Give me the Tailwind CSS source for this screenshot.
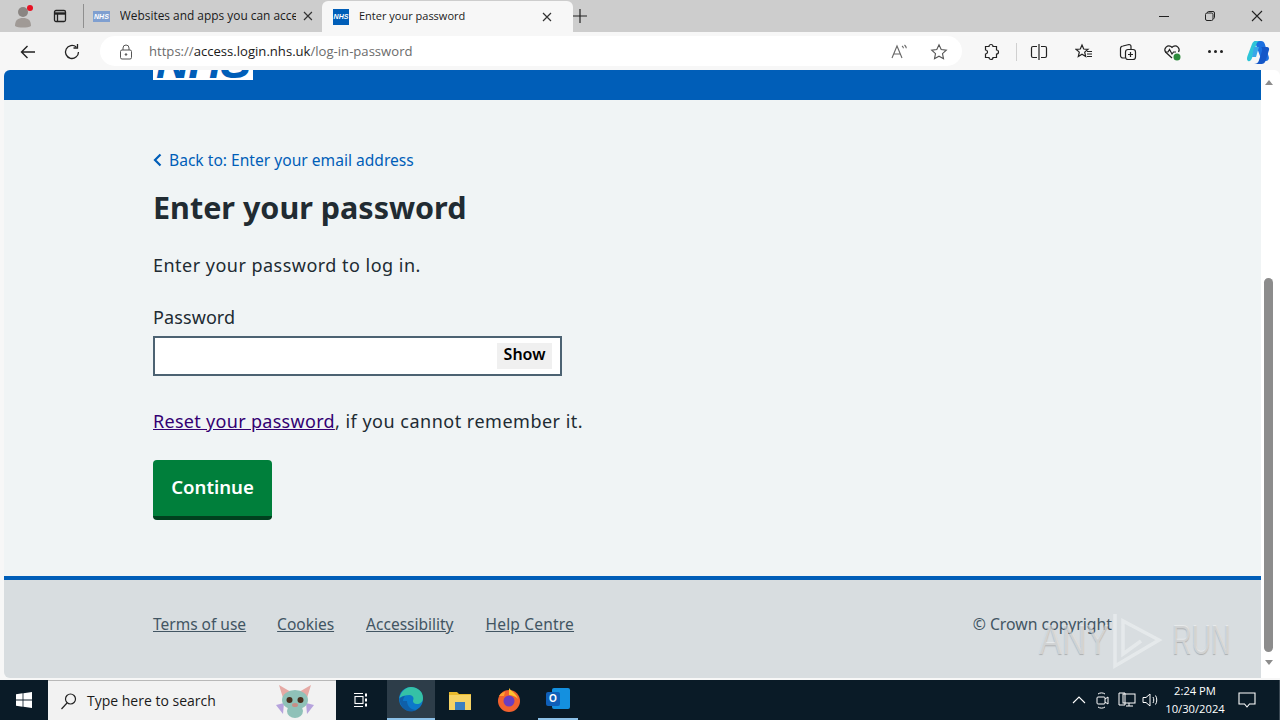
<!DOCTYPE html>
<html lang="en">
  <head>
    <meta charset="UTF-8" />
    <title>Enter your password</title>
    <script src="https://cdn.jsdelivr.net/npm/@tailwindcss/browser@4"></script>
  </head>
  <body class="w-[1280px] h-[720px] overflow-hidden relative bg-[#f7f7f7] font-['Noto_Sans',sans-serif]">
    <!-- Tab strip -->
    <div class="h-[32px] bg-[#cdcdcd] flex items-center text-[#1a1a1a] font-['Open_Sans',sans-serif]">
      <div class="w-[44px] h-[32px] flex items-center justify-center relative">
        <svg width="20" height="24" viewBox="0 0 20 24" class="ml-[1px]">
          <circle cx="10" cy="8" r="5" fill="#8a8582" />
          <path d="M2 22c0-6 3-8 8-8s8 2 8 8c-3 2-13 2-16 0z" fill="#a09a96" />
        </svg>
        <span class="absolute left-[27px] top-[5px] w-[6px] h-[6px] rounded-full bg-[#e81123]"></span>
      </div>
      <div class="w-[32px] h-[32px] flex items-center justify-center">
        <svg width="16" height="16" viewBox="0 0 16 16" fill="none" stroke="#222" stroke-width="1.3">
          <rect x="2.5" y="2.5" width="11" height="11" rx="1.5" />
          <path d="M2.5 5.5h11" stroke-width="2.4" />
          <path d="M5.5 5.5v8" />
        </svg>
      </div>
      <div class="w-[1px] h-[24px] bg-[#8f8f8f] ml-[7px]"></div>
      <!-- inactive tab -->
      <div class="w-[238px] h-[32px] flex items-center pl-[9px] pr-[8px]">
        <div class="w-[17px] h-[11px] bg-[#7f9fd0] text-white text-[7px] leading-[11px] font-bold italic text-center font-['Liberation_Sans',sans-serif]">NHS</div>
        <div class="ml-[10px] text-[11.9px] w-[178px] overflow-hidden whitespace-nowrap">Websites and apps you can acce<span class="text-[#8a8a8a]">s</span></div>
        <svg width="12" height="12" viewBox="0 0 12 12" class="ml-[6px]" stroke="#333" stroke-width="1.2"><path d="M2 2l8 8M10 2l-8 8" /></svg>
      </div>
      <!-- active tab -->
      <div class="w-[251px] h-[32px] bg-[#f7f7f7] rounded-t-[6px] flex items-center pl-[11px] pr-[20px] mt-[1px]">
        <div class="w-[16px] h-[16px] bg-[#005eb8] text-white text-[7px] leading-[16px] font-bold italic text-center font-['Liberation_Sans',sans-serif]">NHS</div>
        <div class="ml-[10px] text-[11px] flex-1 whitespace-nowrap">Enter your password</div>
        <svg width="12" height="12" viewBox="0 0 12 12" stroke="#333" stroke-width="1.2"><path d="M2 2l8 8M10 2l-8 8" /></svg>
      </div>
      <svg width="16" height="16" viewBox="0 0 16 16" class="ml-[-1px]" stroke="#222" stroke-width="1.2"><path d="M8 1v14M1 8h14" /></svg>
      <!-- window controls -->
      <div class="ml-auto flex items-center pr-[16px] gap-[34px]">
        <svg width="12" height="12" viewBox="0 0 12 12" stroke="#222" stroke-width="1"><path d="M1 6.5h10" /></svg>
        <svg width="12" height="12" viewBox="0 0 12 12" fill="none" stroke="#222" stroke-width="1"><rect x="1.5" y="3" width="7.5" height="7.5" rx="1.5" /><path d="M3.5 3V2.5a1 1 0 0 1 1-1h4.500a1.500 1.500 0 0 1 1.500 1.500v4.500a1 1 0 0 1-1 1" /></svg>
        <svg width="14" height="14" viewBox="0 0 14 14" stroke="#222" stroke-width="1.1"><path d="M2 2l10 10M12 2L2 12" /></svg>
      </div>
    </div>

    <!-- Toolbar -->
    <div class="h-[38px] bg-[#f7f7f7] flex items-center">
      <div class="w-[100px] flex items-center pl-[19px] mt-[1px]">
        <svg width="18" height="18" viewBox="0 0 18 18" fill="none" stroke="#222" stroke-width="1.4"><path d="M16 9H2.500M8.500 3L2.500 9l6 6" /></svg>
        <svg width="18" height="18" viewBox="0 0 18 18" fill="none" stroke="#222" stroke-width="1.3" class="ml-[26px]"><path d="M15.500 9a6.500 6.500 0 1 1-2.200-4.900" /><path d="M14.500 1v4h-4" /></svg>
      </div>
      <div class="w-[862px] h-[30px] bg-white rounded-full flex items-center pl-[19px] pr-[14px] pt-[1px] text-[13.1px] text-[#6b6b6b] font-['Open_Sans',sans-serif]">
        <svg width="14" height="16" viewBox="0 0 14 16" fill="none" stroke="#555" stroke-width="1"><rect x="1.500" y="6" width="11" height="9" rx="1.500" /><path d="M4 6V4a3 3 0 0 1 6 0v2" /><circle cx="7" cy="10.500" r="0.800" fill="#555" /></svg>
        <span class="ml-[16px]">https://<span class="text-[#1a1a1a]">access.login.nhs.uk</span>/log-in-password</span>
        <svg width="18" height="18" viewBox="0 0 18 18" fill="none" stroke="#666" stroke-width="1.1" class="ml-auto"><path d="M2 15L7 3l5 12M3.800 11h6.400" /><path d="M12 3c1 .6 1.400 1.400 1.400 2.300M14.500 2c1.200 1 1.800 2 1.800 3.300" /></svg>
        <svg width="18" height="18" viewBox="0 0 18 18" fill="none" stroke="#555" stroke-width="1.1" class="ml-[22px]"><path d="M9 1.800l2.200 4.700 5.100.6-3.800 3.500 1 5.100L9 13.200l-4.500 2.500 1-5.100L1.700 7.100l5.100-.6z" /></svg>
      </div>
      <div class="flex items-center flex-1 pl-[20px] mt-[1px]">
        <svg width="18" height="18" viewBox="0 0 18 18" fill="none" stroke="#222" stroke-width="1.200"><path d="M7 3.500a2 2 0 0 1 4 0h3.500V7a2 2 0 0 1 0 4v3.500H11a2 2 0 0 1-4 0H3.500V11a2 2 0 0 0 0-4V3.500z" /></svg>
        <div class="w-[1px] h-[18px] bg-[#d0d0d0] ml-[16px]"></div>
        <svg width="18" height="18" viewBox="0 0 18 18" fill="none" stroke="#222" stroke-width="1.200" class="ml-[13px]"><path d="M9 1v16M7 3.500H3a1.500 1.500 0 0 0-1.500 1.500v8A1.500 1.500 0 0 0 3 14.500h4M11 3.500h4A1.500 1.500 0 0 1 16.500 5v8a1.500 1.500 0 0 1-1.500 1.500h-4" /></svg>
        <svg width="18" height="18" viewBox="0 0 18 18" fill="none" stroke="#222" stroke-width="1.200" class="ml-[27px]"><path d="M7 2l1.700 4 4.300.3-3.300 2.800 1 4.400L7 11.200l-3.700 2.300 1-4.400L1 6.300 5.300 6zM12 8.500h5M12 11h5M12 13.500h5" /></svg>
        <svg width="18" height="18" viewBox="0 0 18 18" fill="none" stroke="#222" stroke-width="1.200" class="ml-[26px]"><path d="M6 15H4a2.500 2.500 0 0 1-2.500-2.500v-7A2.500 2.500 0 0 1 4 3l6-1.500a2 2 0 0 1 2 2V6" /><rect x="6.500" y="6.500" width="10" height="10" rx="2.500" /><path d="M11.500 9v5M9 11.500h5" /></svg>
        <svg width="20" height="20" viewBox="0 0 20 20" fill="none" stroke="#222" stroke-width="1.200" class="ml-[25px]"><path d="M10 16L3.500 10A4 4 0 0 1 9 4.500l1 1 1-1A4 4 0 0 1 16.500 10" /><path d="M3 10h3l1.500-2.500L10 12l1.500-2H14" /><circle cx="15" cy="15" r="3.500" fill="#2e8b3d" stroke="none" /></svg>
        <div class="flex gap-[3px] ml-[26px]"><span class="w-[3px] h-[3px] rounded-full bg-[#222]"></span><span class="w-[3px] h-[3px] rounded-full bg-[#222]"></span><span class="w-[3px] h-[3px] rounded-full bg-[#222]"></span></div>
        <svg width="26" height="26" viewBox="0 0 26 26" class="ml-[22px]">
          <path d="M10 2h6c2 0 3.200 1 3.800 3l4 13c.6 2.200-.8 4-3 4h-4L11 6c-.4-1.600-1-3-2-4z" fill="#1b6fe0" />
          <path d="M2.500 17L7 5c.7-2 2-3 4-3h4c-2 0-3 1.500-3.500 3L7 19c-.6 2-2 3.500-3.500 3.200C1.800 21.800 1.600 19.500 2.500 17z" fill="#2ec5d8" />
          <path d="M16 8h6c1.800 0 2.500 1.500 2 3l-3.500 11c-.7 2-2 3-4 3H9c2.500 0 4-1 4.700-3L17 12c.5-1.700 0-3.500-1-4z" fill="#1457c8" />
          <path d="M9 8h5l-3 10H7z" fill="#39a7e8" />
        </svg>
      </div>
    </div>

    <!-- Page viewport -->
    <div class="h-[608px] flex pl-[4px] bg-[#f7f7f7]">
      <div class="w-[1257px] h-[608px] flex flex-col bg-[#f0f4f5] rounded-tl-[6px] rounded-bl-[6px] overflow-hidden">
        <header class="h-[30px] bg-[#005eb8] pl-[149px] shrink-0">
          <div class="w-[100px] h-[10px] bg-white overflow-hidden">
            <div class="text-[#005eb8] text-[46px] leading-[10px] font-bold italic tracking-[-1px] pl-[3px] mt-[-13px] h-[16px] font-['Liberation_Sans',sans-serif]">NHS</div>
          </div>
        </header>
        <main class="flex-1 pl-[149px] pt-[49px]">
          <a class="flex items-center text-[#005eb8] text-[15.6px] leading-[22px] h-[22px]">
            <svg width="10" height="14" viewBox="0 0 10 14" fill="none" stroke="#005eb8" stroke-width="2.200" class="mr-[6px]"><path d="M7.500 1.500L2 7l5.500 5.500" /></svg>
            Back to: Enter your email address
          </a>
          <h1 class="mt-[16px] text-[30.5px] leading-[40px] font-bold text-[#212b32]">Enter your password</h1>
          <p class="mt-[25px] text-[18px] leading-[26px] text-[#212b32] tracking-[0.48px]">Enter your password to log in.</p>
          <label class="block mt-[26px] text-[18px] leading-[26px] text-[#212b32] tracking-[0.1px]">Password</label>
          <div class="mt-[6px] w-[409px] h-[40px] bg-white border-2 border-[#4c6272] flex items-center justify-end pr-[8px]">
            <span class="w-[55px] h-[26px] bg-[#f0f0f0] text-black text-[16px] font-semibold flex items-center justify-center pb-[4px]">Show</span>
          </div>
          <p class="mt-[32px] text-[18px] leading-[26px] text-[#212b32] tracking-[0.5px]"><a class="text-[#330072] underline tracking-[0.3px]">Reset your password</a>, if you cannot remember it.</p>
          <button class="block mt-[26px] w-[119px] h-[60px] bg-[#007f3b] border-b-4 border-[#00401e] rounded-[4px] text-white text-[18.6px] font-semibold pb-[3px]">Continue</button>
        </main>
        <footer class="h-[102px] shrink-0 bg-[#d8dde0] border-t-4 border-[#005eb8] flex items-start pl-[149px] pr-[149px] pt-[32px] text-[15.5px] leading-[24px] text-[#425563]">
          <a class="underline">Terms of use</a>
          <a class="underline ml-[31px]">Cookies</a>
          <a class="underline ml-[32px]">Accessibility</a>
          <a class="underline ml-[32px] tracking-[0.2px]">Help Centre</a>
          <span class="ml-auto text-[15.8px]">© Crown copyright</span>
        </footer>
      </div>
      <!-- Scrollbar -->
      <div class="w-[19px] h-[608px] bg-white rounded-tr-[6px] flex flex-col items-center pr-[4px]">
        <div class="w-0 h-0 mt-[10px] border-x-[4px] border-x-transparent border-b-[5px] border-b-[#8c8c8c]"></div>
        <div class="w-[9px] h-[374px] mt-[193px] rounded-full bg-[#8c8c8c]"></div>
        <div class="w-0 h-0 mt-[8px] border-x-[4px] border-x-transparent border-t-[5px] border-t-[#8c8c8c]"></div>
      </div>
    </div>
    <div class="h-[2px] bg-[#f7f7f7]"></div>

    <!-- Taskbar -->
    <div class="h-[40px] bg-[#0a1b27] flex items-center relative">
      <div class="w-[48px] flex justify-center">
        <svg width="16" height="16" viewBox="0 0 16 16" fill="#fff"><path d="M0 2.200L6.600 1.300V7.600H0zM7.400 1.200L16 0V7.600H7.400zM0 8.400H6.600V14.700L0 13.800zM7.400 8.400H16V16L7.400 14.800z" /></svg>
      </div>
      <div class="w-[288px] h-[40px] bg-[#f2f2f2] border-t border-[#b8b8b8] flex items-center pl-[12px] text-[14px] text-[#1a1a1a] font-['Open_Sans',sans-serif]">
        <svg width="18" height="18" viewBox="0 0 18 18" fill="none" stroke="#222" stroke-width="1.200"><circle cx="10.500" cy="7" r="5" /><path d="M7 11l-5.500 6" /></svg>
        <span class="ml-[9px]">Type here to search</span>
        <svg width="40" height="36" viewBox="0 0 40 36" class="ml-[59px]">
          <path d="M8 15L4 2l12 7zM32 15l4-13-12 7z" fill="#e6a9a4" />
          <path d="M9 20L1 22l7 9zM31 20l8 2-7 9z" fill="#b6a3dd" />
          <ellipse cx="20" cy="17" rx="13" ry="10" fill="#8fc1b8" />
          <ellipse cx="20" cy="28" rx="8" ry="7" fill="#8fc1b8" />
          <circle cx="14.500" cy="17" r="3" fill="#4a2f1e" />
          <circle cx="25.500" cy="17" r="3" fill="#4a2f1e" />
          <ellipse cx="20" cy="22" rx="3" ry="2" fill="#c68e86" />
        </svg>
      </div>
      <div class="w-[49px] flex justify-center">
        <svg width="16" height="16" viewBox="0 0 16 16" fill="none" stroke="#fff" stroke-width="1.100"><path d="M1 1.500h9M1 14.500h9" /><rect x="2" y="4.500" width="8" height="7" /><path d="M13 1.500v3M13 6.500v3M13 11.500v3" stroke-width="2" /></svg>
      </div>
      <div class="w-[48px] ml-[2px] h-[40px] bg-[#2d3d49] border-b-[2px] border-[#8cc1e8] flex items-center justify-center">
        <svg width="26" height="26" viewBox="0 0 26 26">
          <circle cx="13" cy="13" r="12" fill="#0c78c9" />
          <path d="M1.500 12C3 5 8 1 13 1c6 0 12 4 12 11 0 4-3 6-6 6-3 0-4-1.500-4-3 0-1 .5-1.500.5-2.500 0-2-2-3.500-4-3.500-4 0-7 1-10.500 3z" fill="#35c1a6" />
          <path d="M9 15c0 5 4 9 9 9-2 1.500-4 1.500-5 1.500C7 25.500 2 20 1.500 13 3 11 5 10 7 10c-1 1-2 3-2 5z" fill="#0f5fa8" />
        </svg>
      </div>
      <div class="w-[50px] flex justify-center">
        <svg width="24" height="22" viewBox="0 0 24 22"><path d="M1 3h8l2 2h12v6H1z" fill="#e8b92c" /><rect x="1" y="6" width="22" height="15" fill="#f6d365" /><rect x="7" y="13" width="10" height="8" fill="#3a7fc1" /></svg>
      </div>
      <div class="w-[48px] flex justify-center">
        <svg width="26" height="26" viewBox="0 0 26 26"><circle cx="13" cy="14" r="11" fill="#f2622e" /><path d="M13 1c2 3 7 5 9 11-3-3-6-4-9-4z" fill="#ffc22e" /><circle cx="13" cy="14" r="5.500" fill="#6a3ec0" /><path d="M3 9c2-3 4-4 6-4l-1 4z" fill="#ff9f2e" /></svg>
      </div>
      <div class="w-[40px] h-[40px] ml-[5px] border-b-[2px] border-[#8cc1e8] flex items-center justify-center">
        <div class="relative w-[26px] h-[24px]">
          <div class="absolute left-[7px] top-[1px] w-[18px] h-[21px] rounded-[2px] bg-[#1490df]"></div>
          <div class="absolute left-[1px] top-[5px] w-[14px] h-[14px] rounded-[2px] bg-[#0f5fb8] text-white text-[10px] leading-[14px] font-bold text-center font-['Liberation_Sans',sans-serif]">O</div>
        </div>
      </div>
      <!-- System tray -->
      <div class="ml-auto flex items-center h-[40px] text-white">
        <svg width="14" height="10" viewBox="0 0 14 10" fill="none" stroke="#fff" stroke-width="1.100"><path d="M1 8l6-6 6 6" /></svg>
        <svg width="16" height="18" viewBox="0 0 16 18" fill="none" stroke="#fff" stroke-width="1" class="ml-[9px]"><rect x="2" y="6" width="8" height="7" rx="1" /><path d="M10 8l3-2v7l-3-2M3 3c2-1.500 5-1.500 7 0M3 16c2 1.500 5 1.500 7 0" /></svg>
        <svg width="18" height="16" viewBox="0 0 18 16" fill="none" stroke="#fff" stroke-width="1" class="ml-[7px]"><rect x="5" y="2" width="12" height="9" /><path d="M1 1h6v12H1zM8 14h7M11 11v3" /></svg>
        <svg width="18" height="16" viewBox="0 0 18 16" fill="none" stroke="#fff" stroke-width="1" class="ml-[6px]"><path d="M1 5.500h3L8 2v12l-4-3.500H1zM11 5c1 1.500 1 4.500 0 6M13.500 3.500c1.700 2.500 1.700 6.500 0 9" /></svg>
        <div class="w-[60px] ml-[5px] text-center text-[11.2px] leading-[18px] font-['Open_Sans',sans-serif]">2:24 PM<br />10/30/2024</div>
        <svg width="18" height="18" viewBox="0 0 18 18" fill="none" stroke="#fff" stroke-width="1.100" class="ml-[13px] mr-[24px]"><path d="M1 2h16v11h-5.500L9 16l-2.500-3H1z" /></svg>
      </div>
      <div class="absolute right-[0px] top-0 w-[1px] h-[40px] bg-[#3a4853]"></div>
    </div>

    <!-- Watermark -->
    <div class="absolute left-[1039px] top-[610px] w-[200px] h-[60px] flex items-center text-white/45 text-[42px] leading-[60px] font-['Liberation_Sans',sans-serif] [text-shadow:0_1px_1px_rgba(120,120,120,0.45)]">
      <span class="block scale-x-[0.81] origin-left w-[72px] whitespace-nowrap">ANY</span>
      <svg width="52" height="60" viewBox="0 0 52 60" fill="none" stroke="#e9eced" stroke-opacity="0.8" stroke-width="3.500"><path d="M4 4v52l44-26L12 11v33l18-13" /></svg>
      <span class="block scale-x-[0.64] origin-left w-[60px] ml-[9px] whitespace-nowrap">RUN</span>
    </div>
  </body>
</html>
